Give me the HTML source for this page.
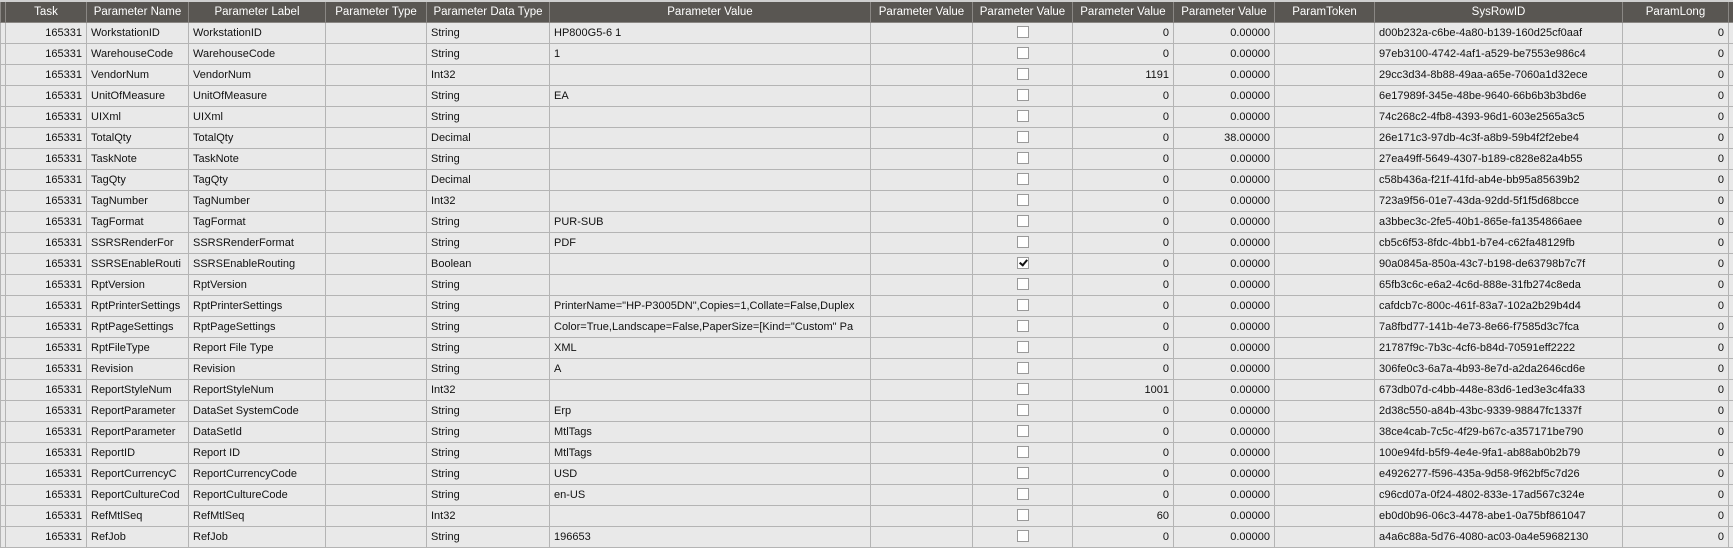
<!DOCTYPE html>
<html><head><meta charset="utf-8"><style>
html,body{margin:0;padding:0;background:#e9e9e9;width:1733px;height:533px;overflow:hidden}
table{border-collapse:collapse;table-layout:fixed;width:1733px;font-family:"Liberation Sans",Arial,sans-serif;font-size:11px;color:#111;position:absolute;left:0;top:0px}
td,th{border:1px solid #b4b4b4;height:20px;padding:1px 4px 0 4px;white-space:nowrap;overflow:hidden;text-overflow:clip;line-height:19px;background:#e9e9e9;box-sizing:border-box}
td:first-child,th:first-child,td:last-child,th:last-child{padding:0}
tr{height:21px}
th{background:#595652;color:#fff;font-weight:normal;text-align:center;border-color:#8a8784;border-top:2px solid #cfcfcf;font-size:11.5px;padding-top:0;line-height:18px}
td.r{text-align:right}
td.c{text-align:center;padding:0}
.cb{display:inline-block;width:10px;height:10px;border:1px solid #9a9a9a;background:#fff;vertical-align:middle;position:relative;top:0px}
.cb.k::after{content:"";position:absolute;left:3px;top:0px;width:3px;height:6px;border:solid #111;border-width:0 2px 2px 0;transform:rotate(40deg)}
</style></head><body>
<table>
<colgroup><col style="width:5px"><col style="width:81px"><col style="width:102px"><col style="width:137px"><col style="width:101px"><col style="width:123px"><col style="width:321px"><col style="width:102px"><col style="width:100px"><col style="width:101px"><col style="width:101px"><col style="width:100px"><col style="width:248px"><col style="width:106px"><col style="width:5px"></colgroup>
<tr><th></th><th>Task</th><th>Parameter Name</th><th>Parameter Label</th><th>Parameter Type</th><th>Parameter Data Type</th><th>Parameter Value</th><th>Parameter Value</th><th>Parameter Value</th><th>Parameter Value</th><th>Parameter Value</th><th>ParamToken</th><th>SysRowID</th><th>ParamLong</th><th></th></tr>
<tr><td></td><td class="r">165331</td><td>WorkstationID</td><td>WorkstationID</td><td></td><td>String</td><td>HP800G5-6 1</td><td></td><td class="c"><span class="cb"></span></td><td class="r">0</td><td class="r">0.00000</td><td></td><td>d00b232a-c6be-4a80-b139-160d25cf0aaf</td><td class="r">0</td><td></td></tr>
<tr><td></td><td class="r">165331</td><td>WarehouseCode</td><td>WarehouseCode</td><td></td><td>String</td><td>1</td><td></td><td class="c"><span class="cb"></span></td><td class="r">0</td><td class="r">0.00000</td><td></td><td>97eb3100-4742-4af1-a529-be7553e986c4</td><td class="r">0</td><td></td></tr>
<tr><td></td><td class="r">165331</td><td>VendorNum</td><td>VendorNum</td><td></td><td>Int32</td><td></td><td></td><td class="c"><span class="cb"></span></td><td class="r">1191</td><td class="r">0.00000</td><td></td><td>29cc3d34-8b88-49aa-a65e-7060a1d32ece</td><td class="r">0</td><td></td></tr>
<tr><td></td><td class="r">165331</td><td>UnitOfMeasure</td><td>UnitOfMeasure</td><td></td><td>String</td><td>EA</td><td></td><td class="c"><span class="cb"></span></td><td class="r">0</td><td class="r">0.00000</td><td></td><td>6e17989f-345e-48be-9640-66b6b3b3bd6e</td><td class="r">0</td><td></td></tr>
<tr><td></td><td class="r">165331</td><td>UIXml</td><td>UIXml</td><td></td><td>String</td><td></td><td></td><td class="c"><span class="cb"></span></td><td class="r">0</td><td class="r">0.00000</td><td></td><td>74c268c2-4fb8-4393-96d1-603e2565a3c5</td><td class="r">0</td><td></td></tr>
<tr><td></td><td class="r">165331</td><td>TotalQty</td><td>TotalQty</td><td></td><td>Decimal</td><td></td><td></td><td class="c"><span class="cb"></span></td><td class="r">0</td><td class="r">38.00000</td><td></td><td>26e171c3-97db-4c3f-a8b9-59b4f2f2ebe4</td><td class="r">0</td><td></td></tr>
<tr><td></td><td class="r">165331</td><td>TaskNote</td><td>TaskNote</td><td></td><td>String</td><td></td><td></td><td class="c"><span class="cb"></span></td><td class="r">0</td><td class="r">0.00000</td><td></td><td>27ea49ff-5649-4307-b189-c828e82a4b55</td><td class="r">0</td><td></td></tr>
<tr><td></td><td class="r">165331</td><td>TagQty</td><td>TagQty</td><td></td><td>Decimal</td><td></td><td></td><td class="c"><span class="cb"></span></td><td class="r">0</td><td class="r">0.00000</td><td></td><td>c58b436a-f21f-41fd-ab4e-bb95a85639b2</td><td class="r">0</td><td></td></tr>
<tr><td></td><td class="r">165331</td><td>TagNumber</td><td>TagNumber</td><td></td><td>Int32</td><td></td><td></td><td class="c"><span class="cb"></span></td><td class="r">0</td><td class="r">0.00000</td><td></td><td>723a9f56-01e7-43da-92dd-5f1f5d68bcce</td><td class="r">0</td><td></td></tr>
<tr><td></td><td class="r">165331</td><td>TagFormat</td><td>TagFormat</td><td></td><td>String</td><td>PUR-SUB</td><td></td><td class="c"><span class="cb"></span></td><td class="r">0</td><td class="r">0.00000</td><td></td><td>a3bbec3c-2fe5-40b1-865e-fa1354866aee</td><td class="r">0</td><td></td></tr>
<tr><td></td><td class="r">165331</td><td>SSRSRenderFor</td><td>SSRSRenderFormat</td><td></td><td>String</td><td>PDF</td><td></td><td class="c"><span class="cb"></span></td><td class="r">0</td><td class="r">0.00000</td><td></td><td>cb5c6f53-8fdc-4bb1-b7e4-c62fa48129fb</td><td class="r">0</td><td></td></tr>
<tr><td></td><td class="r">165331</td><td>SSRSEnableRouti</td><td>SSRSEnableRouting</td><td></td><td>Boolean</td><td></td><td></td><td class="c"><span class="cb k"></span></td><td class="r">0</td><td class="r">0.00000</td><td></td><td>90a0845a-850a-43c7-b198-de63798b7c7f</td><td class="r">0</td><td></td></tr>
<tr><td></td><td class="r">165331</td><td>RptVersion</td><td>RptVersion</td><td></td><td>String</td><td></td><td></td><td class="c"><span class="cb"></span></td><td class="r">0</td><td class="r">0.00000</td><td></td><td>65fb3c6c-e6a2-4c6d-888e-31fb274c8eda</td><td class="r">0</td><td></td></tr>
<tr><td></td><td class="r">165331</td><td>RptPrinterSettings</td><td>RptPrinterSettings</td><td></td><td>String</td><td>PrinterName="HP-P3005DN",Copies=1,Collate=False,Duplex</td><td></td><td class="c"><span class="cb"></span></td><td class="r">0</td><td class="r">0.00000</td><td></td><td>cafdcb7c-800c-461f-83a7-102a2b29b4d4</td><td class="r">0</td><td></td></tr>
<tr><td></td><td class="r">165331</td><td>RptPageSettings</td><td>RptPageSettings</td><td></td><td>String</td><td>Color=True,Landscape=False,PaperSize=[Kind="Custom" Pa</td><td></td><td class="c"><span class="cb"></span></td><td class="r">0</td><td class="r">0.00000</td><td></td><td>7a8fbd77-141b-4e73-8e66-f7585d3c7fca</td><td class="r">0</td><td></td></tr>
<tr><td></td><td class="r">165331</td><td>RptFileType</td><td>Report File Type</td><td></td><td>String</td><td>XML</td><td></td><td class="c"><span class="cb"></span></td><td class="r">0</td><td class="r">0.00000</td><td></td><td>21787f9c-7b3c-4cf6-b84d-70591eff2222</td><td class="r">0</td><td></td></tr>
<tr><td></td><td class="r">165331</td><td>Revision</td><td>Revision</td><td></td><td>String</td><td>A</td><td></td><td class="c"><span class="cb"></span></td><td class="r">0</td><td class="r">0.00000</td><td></td><td>306fe0c3-6a7a-4b93-8e7d-a2da2646cd6e</td><td class="r">0</td><td></td></tr>
<tr><td></td><td class="r">165331</td><td>ReportStyleNum</td><td>ReportStyleNum</td><td></td><td>Int32</td><td></td><td></td><td class="c"><span class="cb"></span></td><td class="r">1001</td><td class="r">0.00000</td><td></td><td>673db07d-c4bb-448e-83d6-1ed3e3c4fa33</td><td class="r">0</td><td></td></tr>
<tr><td></td><td class="r">165331</td><td>ReportParameter</td><td>DataSet SystemCode</td><td></td><td>String</td><td>Erp</td><td></td><td class="c"><span class="cb"></span></td><td class="r">0</td><td class="r">0.00000</td><td></td><td>2d38c550-a84b-43bc-9339-98847fc1337f</td><td class="r">0</td><td></td></tr>
<tr><td></td><td class="r">165331</td><td>ReportParameter</td><td>DataSetId</td><td></td><td>String</td><td>MtlTags</td><td></td><td class="c"><span class="cb"></span></td><td class="r">0</td><td class="r">0.00000</td><td></td><td>38ce4cab-7c5c-4f29-b67c-a357171be790</td><td class="r">0</td><td></td></tr>
<tr><td></td><td class="r">165331</td><td>ReportID</td><td>Report ID</td><td></td><td>String</td><td>MtlTags</td><td></td><td class="c"><span class="cb"></span></td><td class="r">0</td><td class="r">0.00000</td><td></td><td>100e94fd-b5f9-4e4e-9fa1-ab88ab0b2b79</td><td class="r">0</td><td></td></tr>
<tr><td></td><td class="r">165331</td><td>ReportCurrencyC</td><td>ReportCurrencyCode</td><td></td><td>String</td><td>USD</td><td></td><td class="c"><span class="cb"></span></td><td class="r">0</td><td class="r">0.00000</td><td></td><td>e4926277-f596-435a-9d58-9f62bf5c7d26</td><td class="r">0</td><td></td></tr>
<tr><td></td><td class="r">165331</td><td>ReportCultureCod</td><td>ReportCultureCode</td><td></td><td>String</td><td>en-US</td><td></td><td class="c"><span class="cb"></span></td><td class="r">0</td><td class="r">0.00000</td><td></td><td>c96cd07a-0f24-4802-833e-17ad567c324e</td><td class="r">0</td><td></td></tr>
<tr><td></td><td class="r">165331</td><td>RefMtlSeq</td><td>RefMtlSeq</td><td></td><td>Int32</td><td></td><td></td><td class="c"><span class="cb"></span></td><td class="r">60</td><td class="r">0.00000</td><td></td><td>eb0d0b96-06c3-4478-abe1-0a75bf861047</td><td class="r">0</td><td></td></tr>
<tr><td></td><td class="r">165331</td><td>RefJob</td><td>RefJob</td><td></td><td>String</td><td>196653</td><td></td><td class="c"><span class="cb"></span></td><td class="r">0</td><td class="r">0.00000</td><td></td><td>a4a6c88a-5d76-4080-ac03-0a4e59682130</td><td class="r">0</td><td></td></tr>
</table>
</body></html>
